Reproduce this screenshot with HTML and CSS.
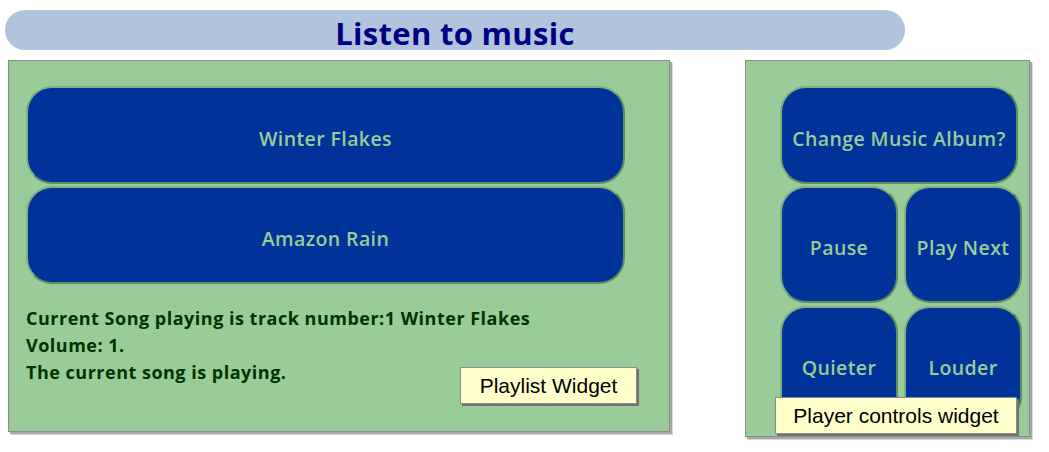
FILE: index.html
```html
<!DOCTYPE html>
<html>
<head>
<meta charset="utf-8">
<link rel="stylesheet" href="styles.css">
</head>
<body>
<header class="title-bar"><h1 class="title">Listen to music</h1></header>
<main class="panels">
  <section class="panel playlist">
    <div class="song-list">
      <button class="btn song">Winter Flakes</button>
      <button class="btn song">Amazon Rain</button>
    </div>
    <div class="status">
      <p>Current Song playing is track number:1 Winter Flakes</p>
      <p>Volume: 1.</p>
      <p>The current song is playing.</p>
    </div>
    <div class="tag tag-playlist">Playlist Widget</div>
  </section>
  <section class="panel controls">
    <button class="btn album">Change Music Album?</button>
    <div class="control-grid">
      <button class="btn ctrl">Pause</button>
      <button class="btn ctrl">Play Next</button>
      <button class="btn ctrl">Quieter</button>
      <button class="btn ctrl">Louder</button>
    </div>
    <div class="tag tag-controls">Player controls widget</div>
  </section>
</main>
</body>
</html>
```
FILE: styles.css
```css
html, body {
  margin: 0;
  padding: 0;
  background: #ffffff;
}
body {
  width: 1049px;
  height: 452px;
  overflow: hidden;
  font-family: "Open Sans", "DejaVu Sans", sans-serif;
}
.title-bar {
  margin: 10px 0 0 5px;
  width: 900px;
  height: 40px;
  background: #b0c4de;
  border-radius: 20px;
  display: flex;
  align-items: center;
  justify-content: center;
}
.title {
  margin: 0;
  font-size: 31px;
  font-weight: 700;
  color: #000080;
  line-height: 40px;
  padding-top: 6px;
  letter-spacing: 0.3px;
}
.panels {
  display: flex;
  align-items: flex-start;
  margin-top: 10px;
}
.panel {
  position: relative;
  background: #99cc99;
  border: 1px solid #8c8c8c;
  box-shadow: 2px 2px 0 #a8a8a8, 3px 3px 0 #d8d8d8;
  box-sizing: border-box;
}
.playlist {
  margin-left: 8px;
  width: 662px;
  height: 372px;
  padding: 25px 0 0 17px;
}
.controls {
  margin-left: 75px;
  width: 285px;
  height: 377px;
  padding: 25px 0 0 34px;
}
.btn {
  display: flex;
  align-items: center;
  justify-content: center;
  background: #003399;
  color: #99cc99;
  font-family: "Open Sans", "DejaVu Sans", sans-serif;
  font-size: 19.5px;
  font-weight: 600;
  letter-spacing: 0.4px;
  box-sizing: border-box;
  border: 2px solid;
  border-color: #7fae7f #5f8f5f #5f8f5f #7fae7f;
  padding: 6px 0 0 0;
}
.song-list {
  display: flex;
  flex-direction: column;
  gap: 2px;
}
.song {
  width: 599px;
  height: 98px;
  border-radius: 26px;
}
.status {
  margin-top: 21px;
  color: #003300;
  font-size: 18px;
  font-weight: 700;
  line-height: 27px;
  letter-spacing: 0.5px;
}
.status p {
  margin: 0;
}
.album {
  width: 238px;
  height: 98px;
  border-radius: 26px;
}
.control-grid {
  margin-top: 2px;
  display: grid;
  grid-template-columns: 118px 118px;
  grid-auto-rows: 117px;
  column-gap: 6px;
  row-gap: 3px;
}
.ctrl {
  border-radius: 26px;
}
.tag {
  position: absolute;
  background: #ffffcc;
  border: 1px solid #8c8c8c;
  box-shadow: 2px 2px 0 #707070;
  font-family: "Liberation Sans", Arial, sans-serif;
  font-size: 21px;
  color: #000;
  display: flex;
  align-items: center;
  justify-content: center;
  box-sizing: border-box;
}
.tag-playlist {
  left: 451px;
  top: 306px;
  width: 177px;
  height: 37px;
}
.tag-controls {
  left: 29px;
  top: 336px;
  width: 242px;
  height: 37px;
}
```
